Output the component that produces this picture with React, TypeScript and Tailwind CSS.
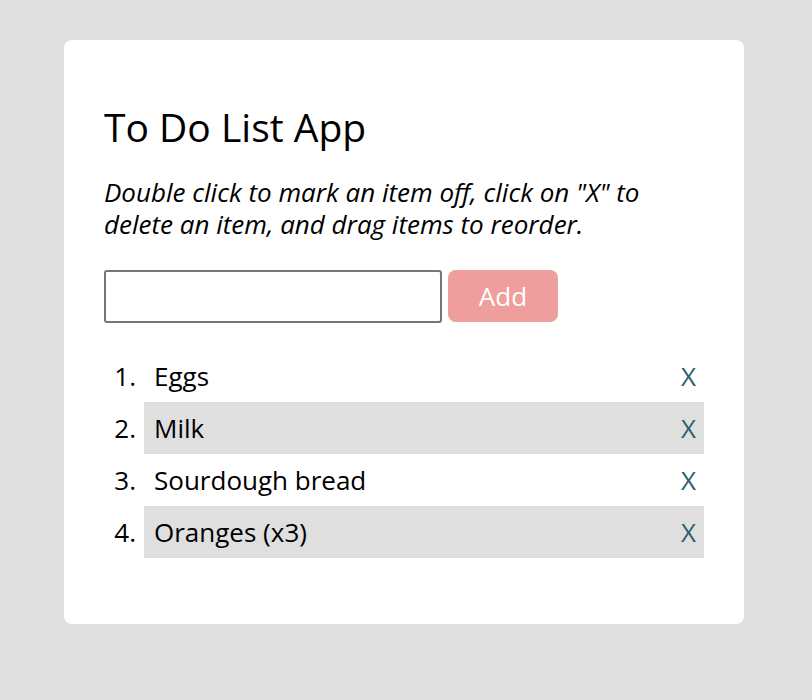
import { useState } from 'react';

const ITEMS = ['Eggs', 'Milk', 'Sourdough bread', 'Oranges (x3)'];

export default function App() {
  const [items, setItems] = useState(ITEMS);
  const [text, setText] = useState('');

  const addItem = () => {
    if (!text.trim()) return;
    setItems([...items, text.trim()]);
    setText('');
  };

  return (
    <div className="min-h-screen bg-[#dfdfdf] pt-10 font-['Open_Sans',sans-serif] text-black">
      <div className="ml-16 w-[680px] rounded-lg bg-white px-10 pt-[63px] pb-[66px]">
        <h1 className="text-[39px] leading-[48px]">To Do List App</h1>
        <p className="mt-[25px] text-[26px] italic leading-[32px]">
          Double click to mark an item off, click on "X" to delete an item, and drag items to reorder.
        </p>

        <div className="mt-[30px] flex items-start gap-1.5">
          <input
            className="h-[53px] w-[338px] rounded-[3px] border-2 border-[#767676] px-2 text-[26px] outline-none"
            value={text}
            onChange={(e) => setText(e.target.value)}
          />
          <button
            onClick={addItem}
            className="h-[52px] w-[110px] rounded-lg bg-[#ef9e9e] text-[26px] text-white"
          >
            Add
          </button>
        </div>

        {/* list */}
        <ol className="mt-[27px] pl-10">
          {items.map((item, i) => (
            <li
              key={i}
              className={`flex h-[52px] items-center pl-2.5 pr-2 text-[26px] ${i % 2 === 1 ? 'bg-[#dfdfdf]' : ''}`}
            >
              <span className="-ml-[50px] mr-2.5 w-10 pr-2 text-right">{i + 1}.</span>
              <span className="flex-1">{item}</span>
              <button
                className="text-[#2d5f6e]"
                onClick={() => setItems(items.filter((_, j) => j !== i))}
              >
                X
              </button>
            </li>
          ))}
        </ol>
      </div>
    </div>
  );
}
